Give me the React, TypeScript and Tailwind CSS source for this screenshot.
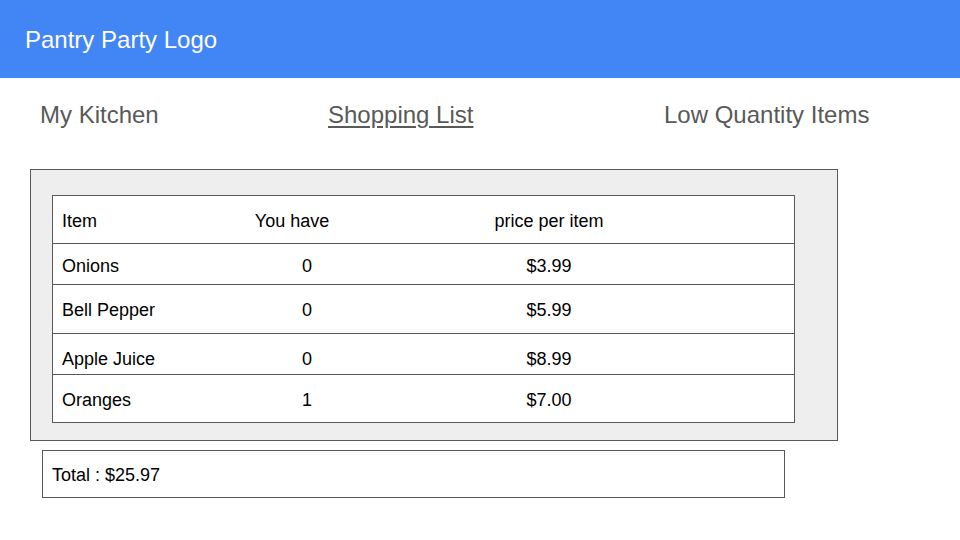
import React from "react";

const rows = [
  { name: "Onions", have: "0", price: "$3.99", h: "h-[41px]", extra: "pt-[3px]" },
  { name: "Bell Pepper", have: "0", price: "$5.99", h: "h-[49px]", extra: "pt-[2px]" },
  { name: "Apple Juice", have: "0", price: "$8.99", h: "h-[41px]", extra: "pt-[9px]" },
  { name: "Oranges", have: "1", price: "$7.00", h: "h-[47px]", extra: "pt-[2px]" },
];

export default function App() {
  return (
    <div
      className="w-[960px] h-[540px] bg-white overflow-hidden"
      style={{ fontFamily: '"Liberation Sans", Arial, sans-serif' }}
    >
      <header className="h-[78px] bg-[#4285f4] flex items-center pl-[25px] pt-[2px] text-white text-[24px] leading-none">
        Pantry Party Logo
      </header>

      <nav className="h-[72px] flex items-center pl-[40px] pt-[1px] text-[24px] leading-none text-[#595959]">
        <div className="w-[288px]">My Kitchen</div>
        <div className="w-[336px] underline underline-offset-[3px]">Shopping List</div>
        <div>Low Quantity Items</div>
      </nav>

      <section className="ml-[30px] mt-[19px] w-[808px] h-[272px] bg-[#eeeeee] border border-[#595959] pt-[25px] pl-[21px]">
        <div className="w-[743px] border border-[#595959] bg-white text-[18px] leading-none text-black">
          <div className="h-[48px] flex items-center pt-[2px] border-b border-[#595959]">
            <div className="w-[150px] pl-[9px]">Item</div>
            <div className="w-[178px] text-center">You have</div>
            <div className="w-[336px] text-center">price per item</div>
          </div>
          {rows.map((r, i) => (
            <div
              key={r.name}
              className={`${r.h} flex items-center ${r.extra} ${i < rows.length - 1 ? "border-b border-[#595959]" : ""}`}
            >
              <div className="w-[180px] pl-[9px]">{r.name}</div>
              <div className="w-[148px] text-center">{r.have}</div>
              <div className="w-[336px] text-center">{r.price}</div>
            </div>
          ))}
        </div>
      </section>

      <div className="ml-[42px] mt-[9px] w-[743px] h-[48px] border border-[#595959] flex items-center pl-[9px] pt-[2px] text-[18px] leading-none text-black">
        Total : $25.97
      </div>
    </div>
  );
}
